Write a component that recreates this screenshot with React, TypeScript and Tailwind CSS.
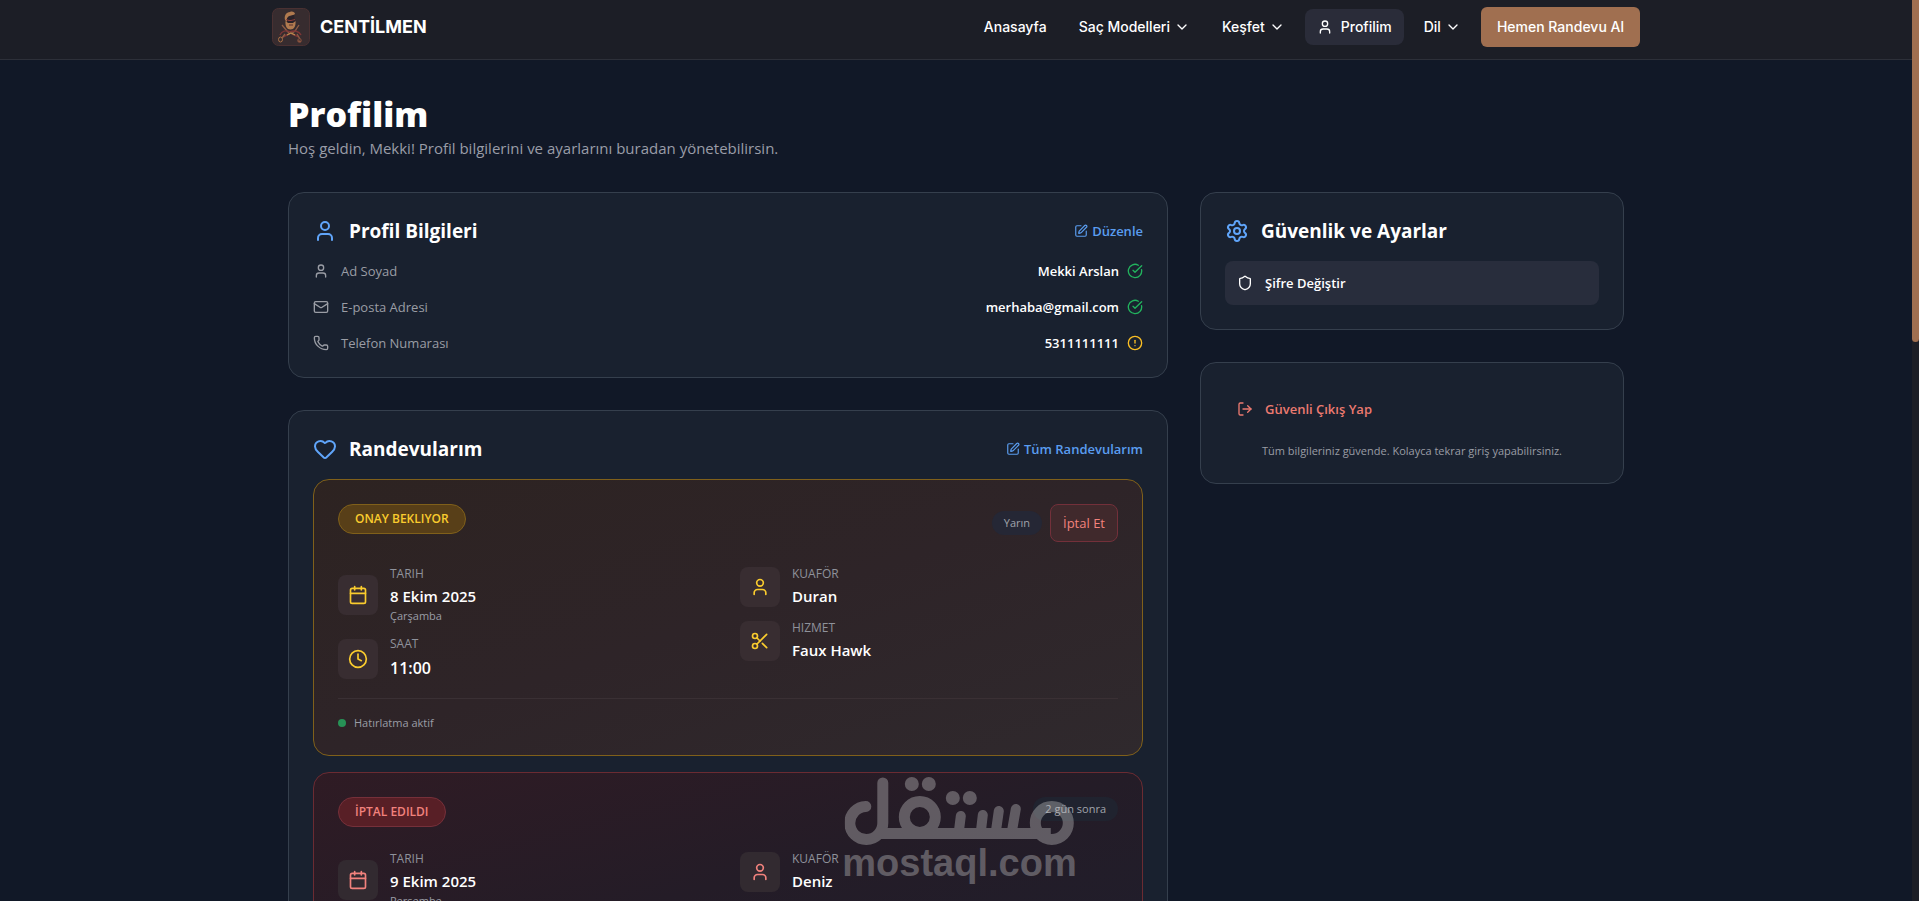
import type { ReactNode } from "react";
import {
  Calendar,
  ChevronDown,
  CircleAlert,
  CircleCheckBig,
  Clock,
  Heart,
  LogOut,
  Mail,
  Phone,
  Scissors,
  Settings,
  Shield,
  SquarePen,
  User,
  type LucideIcon,
} from "lucide-react";
import clsx from "clsx";

function Logo() {
  return (
    <svg viewBox="0 0 38 38" className="size-[38px]" fill="none" aria-hidden="true">
      <rect x="0.5" y="0.5" width="37" height="37" rx="6" fill="#372c2f" stroke="#4a3132" />
      <path d="M13 12c-1-4 1-8 5-8 2-1 5 0 5 2-2 2-6 1-7 3l-1 5z" fill="#b07a4f" />
      <path d="M15 10c2-2 5-2 7-3l1 7-2 1h-5l-1-1z" fill="#2a2229" />
      <path d="M14 11.500l3 1h2l4-1" stroke="#8d3d3a" />
      <path d="M13.500 13l2.500 2h5l2.500-2c.5 5-1.500 8.500-5 8.500s-5.500-3.500-5-8.500z" fill="#b07a4f" />
      <path d="M17 17h4" stroke="#5b3030" />
      <path d="M10 17l5 6 3 3M27 17l-4 6-4 3" stroke="#8f5d45" strokeWidth="1.300" />
      <path d="M8 27c2-4 6-5 10-3 4-2 9-1 11 3M11 29l6-3M27 29l-7-3" stroke="#7c3536" strokeWidth="1.500" />
      <path d="M15 27l4-2 4 2" stroke="#b98a4e" strokeWidth="1.300" />
      <ellipse cx="8.500" cy="31.500" rx="2" ry="2.500" stroke="#a87045" />
      <path d="M10 30l3-4M25 26l3 5M26 33l3 .5" stroke="#8f5d45" strokeWidth="1.300" />
      <circle cx="27.500" cy="32.500" r="1.800" stroke="#8a4f3b" />
    </svg>
  );
}

interface NavItemProps {
  label: string;
  icon?: LucideIcon;
  active?: boolean;
  menu?: boolean;
}

function NavItem({ label, icon: Icon, active, menu }: NavItemProps) {
  const className = clsx("flex h-9 items-center rounded-lg px-3", active && "gap-2 bg-[#2a2c39]", menu && "gap-1");

  if (menu) {
    return (
      <button type="button" className={className}>
        {label}
        <ChevronDown className="size-4" />
      </button>
    );
  }

  return (
    <a href="#" className={className}>
      {Icon && <Icon className="size-4" />}
      {label}
    </a>
  );
}

function Header() {
  return (
    <header className="border-b border-[#2d3039] bg-[#1c1e26] font-['Inter',sans-serif] text-white">
      <div className="mx-auto flex w-full max-w-[1400px] items-center justify-between px-4 pt-[7px] pb-3">
        <a href="#" className="flex items-center gap-[10px]">
          <Logo />
          <span className="text-lg leading-6 font-bold">CENTİLMEN</span>
        </a>
        <nav className="flex items-center gap-2 text-sm font-medium">
          <NavItem label="Anasayfa" />
          <NavItem label="Saç Modelleri" menu />
          <NavItem label="Keşfet" menu />
          <NavItem label="Profilim" icon={User} active />
          <NavItem label="Dil" menu />
          <a href="#" className="flex h-10 items-center rounded-md bg-[#a06f50] px-4">
            Hemen Randevu Al
          </a>
        </nav>
      </div>
    </header>
  );
}

function Card({ children }: { children: ReactNode }) {
  return <section className="rounded-2xl border border-[#353f4d] bg-[#19212f] p-6">{children}</section>;
}

interface CardHeaderProps {
  icon: LucideIcon;
  title: string;
  action?: string;
}

function CardHeader({ icon: Icon, title, action }: CardHeaderProps) {
  return (
    <div className="mb-4 flex h-7 items-center justify-between">
      <div className="flex items-center gap-3">
        <Icon className="size-6 text-[#60a5fa]" />
        <h2 className="text-[19px] leading-7 font-bold">{title}</h2>
      </div>
      {action && (
        <a href="#" className="flex items-center gap-1 text-[13px] leading-5 font-semibold text-[#5a9df0]">
          <SquarePen className="size-[14px]" />
          {action}
        </a>
      )}
    </div>
  );
}

interface InfoRowProps {
  icon: LucideIcon;
  label: string;
  value: string;
  verified?: boolean;
}

function InfoRow({ icon: Icon, label, value, verified }: InfoRowProps) {
  return (
    <div className="flex items-center justify-between text-[13px] leading-5">
      <dt className="flex items-center gap-3 text-[#9a9da5]">
        <Icon className="size-4" />
        {label}
      </dt>
      <dd className="flex items-center gap-2 font-semibold">
        {value}
        {verified ? (
          <CircleCheckBig className="size-4 text-[#22b35e]" />
        ) : (
          <CircleAlert className="size-4 text-[#fbbf24]" />
        )}
      </dd>
    </div>
  );
}

interface DetailProps {
  icon: LucideIcon;
  label: string;
  value: string;
  note?: string;
  large?: boolean;
  tone: Tone;
}

function Detail({ icon: Icon, label, value, note, large, tone }: DetailProps) {
  return (
    <div className="flex items-center gap-3">
      <div className={clsx("flex size-10 shrink-0 items-center justify-center rounded-lg", tones[tone].tile)}>
        <Icon className={clsx("size-5", tones[tone].icon)} />
      </div>
      <div>
        <p className="mb-[2px] text-[12px] leading-4 text-[#8f929b]">{label}</p>
        <p className={large ? "text-[16px] leading-7 font-semibold" : "text-[15px] leading-6 font-semibold"}>{value}</p>
        {note && <p className="text-[11px] leading-4 text-[#9a9da5]">{note}</p>}
      </div>
    </div>
  );
}

type Tone = "pending" | "cancelled";

const tones = {
  pending: {
    card: "border-[#80601a] bg-linear-to-br from-[#2d2321] via-[#2e2428] to-[#2f292d]",
    badge: "border-[#80601a] bg-[#583f18] text-[#facc2e]",
    tile: "bg-[#382d31]",
    icon: "text-[#facc2e]",
    pill: "bg-[#252735]",
  },
  cancelled: {
    card: "border-[#6b2b32] bg-linear-to-br from-[#2f1b24] via-[#241c27] to-[#1f1e2c]",
    badge: "border-[#76303a] bg-[#581f26] text-[#f2827d]",
    tile: "bg-[#322a30]",
    icon: "text-[#f2827d]",
    pill: "bg-[#20232f]",
  },
};

interface AppointmentProps {
  tone: Tone;
  status: string;
  when: string;
  date: string;
  day: string;
  time: string;
  barber: string;
  service: string;
  reminder?: boolean;
}

function Appointment({ tone, status, when, date, day, time, barber, service, reminder }: AppointmentProps) {
  const style = tones[tone];

  return (
    <article className={clsx("rounded-2xl border p-6", style.card)}>
      <div className="mb-6 flex items-start justify-between">
        <span className={clsx("rounded-full border px-4 py-[6px] text-[12px] leading-4 font-semibold", style.badge)}>
          {status}
        </span>
        <div className="flex items-center gap-2">
          <span className={clsx("rounded-full px-3 py-1 text-[11px] leading-4 text-[#a0a3ab]", style.pill)}>
            {when}
          </span>
          {reminder && (
            <button
              type="button"
              className="h-[38px] rounded-lg border border-[#73303a] bg-[#40292c] px-3 text-[13px] leading-5 text-[#f2827d]"
            >
              İptal Et
            </button>
          )}
        </div>
      </div>
      <div className="grid grid-cols-2 gap-6">
        <div className="flex flex-col gap-3">
          <Detail icon={Calendar} label="TARIH" value={date} note={day} tone={tone} />
          <Detail icon={Clock} label="SAAT" value={time} large tone={tone} />
        </div>
        <div className="flex flex-col gap-3">
          <Detail icon={User} label="KUAFÖR" value={barber} tone={tone} />
          <Detail icon={Scissors} label="HIZMET" value={service} tone={tone} />
        </div>
      </div>
      {reminder && (
        <div className="mt-4 flex items-center gap-2 border-t border-[#3a3034] pt-4 text-[11px] leading-4 text-[#9a9da5]">
          <span className="size-2 rounded-full bg-[#279256]" />
          Hatırlatma aktif
        </div>
      )}
    </article>
  );
}

function Watermark() {
  return (
    <div className="pointer-events-none absolute bottom-5 left-1/2 flex -translate-x-1/2 flex-col items-center text-[#c8c8c8] opacity-[0.37]">
      <svg viewBox="2 0 230 68" className="w-[230px]" fill="none" stroke="currentColor" aria-hidden="true">
        <g strokeWidth="11" strokeLinecap="round">
          <path d="M23 29.500A16.500 16.500 0 1 0 40 46V6" />
          <path d="M34 56.500H208" strokeLinecap="butt" />
          <circle cx="77" cy="40" r="15.500" />
          <circle cx="209" cy="46" r="16.500" />
          <path d="M118 39l-2 16M140 38l-2 17M156 34l-3 21M173 32l-4 23" strokeWidth="10" />
        </g>
        <g fill="currentColor" stroke="none">
          <circle cx="69" cy="7" r="7" />
          <circle cx="86" cy="7" r="7" />
          <circle cx="110" cy="21" r="7" />
          <circle cx="127" cy="21" r="7" />
        </g>
      </svg>
      <span className="font-['Liberation_Sans',sans-serif] text-[38px] leading-9 font-bold">mostaql.com</span>
    </div>
  );
}

export default function App() {
  return (
    <div className="relative flex h-screen overflow-hidden bg-[#111827] font-['Open_Sans',sans-serif] text-white">
      <div className="min-w-0 flex-1 overflow-y-auto [scrollbar-width:none]">
        <Header />
        <main className="mx-auto w-full max-w-[1400px] px-8 py-8">
          <h1 className="text-[34px] leading-[44px] font-extrabold">Profilim</h1>
          <p className="mb-8 text-[15px] leading-6 text-[#9a9da8]">
            Hoş geldin, Mekki! Profil bilgilerini ve ayarlarını buradan yönetebilirsin.
          </p>
          <div className="grid grid-cols-3 items-start gap-8">
            <div className="col-span-2 flex flex-col gap-8">
              <Card>
                <CardHeader icon={User} title="Profil Bilgileri" action="Düzenle" />
                <dl className="flex flex-col gap-4">
                  <InfoRow icon={User} label="Ad Soyad" value="Mekki Arslan" verified />
                  <InfoRow icon={Mail} label="E-posta Adresi" value="merhaba@gmail.com" verified />
                  <InfoRow icon={Phone} label="Telefon Numarası" value="5311111111" />
                </dl>
              </Card>
              <Card>
                <CardHeader icon={Heart} title="Randevularım" action="Tüm Randevularım" />
                <div className="flex flex-col gap-4">
                  <Appointment
                    tone="pending"
                    status="ONAY BEKLIYOR"
                    when="Yarın"
                    date="8 Ekim 2025"
                    day="Çarşamba"
                    time="11:00"
                    barber="Duran"
                    service="Faux Hawk"
                    reminder
                  />
                  <Appointment
                    tone="cancelled"
                    status="İPTAL EDILDI"
                    when="2 gün sonra"
                    date="9 Ekim 2025"
                    day="Perşembe"
                    time="11:00"
                    barber="Deniz"
                    service="Faux Hawk"
                  />
                </div>
              </Card>
            </div>
            <div className="flex flex-col gap-8">
              <Card>
                <CardHeader icon={Settings} title="Güvenlik ve Ayarlar" />
                <button
                  type="button"
                  className="flex h-11 w-full items-center gap-3 rounded-lg bg-[#282d3c] px-3 text-[13px] leading-5 font-semibold"
                >
                  <Shield className="size-4" />
                  Şifre Değiştir
                </button>
              </Card>
              <Card>
                <button
                  type="button"
                  className="flex h-11 w-full items-center gap-3 rounded-lg px-3 text-[13px] leading-5 font-semibold text-[#ec7a70]"
                >
                  <LogOut className="size-4" />
                  Güvenli Çıkış Yap
                </button>
                <p className="mt-3 text-center text-[11px] leading-4 text-[#9a9da5]">
                  Tüm bilgileriniz güvende. Kolayca tekrar giriş yapabilirsiniz.
                </p>
              </Card>
            </div>
          </div>
        </main>
      </div>
      <div className="w-[7px] bg-[#1c1e26]" aria-hidden="true">
        <div className="h-[38%] rounded-b-sm bg-[#a06f50]" />
      </div>
      <Watermark />
    </div>
  );
}
